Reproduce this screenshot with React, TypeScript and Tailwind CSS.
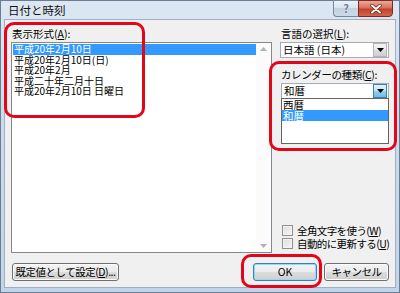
import type { ReactNode } from "react";

const vistaBtn =
  "bg-[linear-gradient(to_bottom,#f3f3f3_0%,#ebebeb_50%,#dddddd_50%,#cfcfcf_100%)]";

function Acc({ children }: { children: ReactNode }) {
  return <span className="underline underline-offset-[1px]">{children}</span>;
}

function Arrow({ active = false }: { active?: boolean }) {
  return (
    <div
      className={`w-[14px] h-[14px] flex items-center justify-center border ${
        active
          ? "border-[#3c7fb1] bg-[linear-gradient(to_bottom,#e5f4fc_0%,#c4e5f6_50%,#98d1ef_50%,#6cbbe6_100%)]"
          : `border-[#b5b5b5] ${vistaBtn}`
      }`}
    >
      <svg width="7" height="4" viewBox="0 0 7 4">
        <path d="M0 0h7L3.5 4z" fill="#000" />
      </svg>
    </div>
  );
}

function Check({ label }: { label: ReactNode }) {
  return (
    <div className="h-[13px] flex items-center gap-[4px] pl-[2px] whitespace-nowrap">
      <div className="w-[11px] h-[11px] shrink-0 border border-[#8e8f8f] bg-[linear-gradient(135deg,#dcdcdc,#f6f6f6)] shadow-[inset_0_0_0_1px_#f4f4f4]" />
      <span className="leading-[12px] tracking-[-0.6px]">{label}</span>
    </div>
  );
}

function Button({ children, primary = false, className = "" }: { children: ReactNode; primary?: boolean; className?: string }) {
  return (
    <div
      className={`h-[18px] flex items-center justify-center rounded-[3px] border whitespace-nowrap ${
        primary
          ? "border-[#3c7fb1] shadow-[inset_0_0_0_1px_#90dcf8]"
          : "border-[#707070] shadow-[inset_0_0_0_1px_#fbfbfb]"
      } ${vistaBtn} ${className}`}
    >
      <span className="leading-[12px]">{children}</span>
    </div>
  );
}

const formats = [
  "平成20年2月10日",
  "平成20年2月10日(日)",
  "平成20年2月",
  "平成二十年二月十日",
  "平成20年2月10日 日曜日",
];

export default function App() {
  return (
    <div className="w-[400px] h-[293px] relative overflow-hidden font-['Noto_Sans_CJK_JP','Noto_Sans',sans-serif] text-[10.5px] text-black bg-white">
      <div className="w-full h-full flex flex-col border border-[#6b7d92] bg-[linear-gradient(to_bottom,#dce7f3_0%,#ccdcec_40%,#c2d4e8_100%)]">
        {/* Title bar */}
        <div className="h-[18px] flex items-start shrink-0">
          <span className="pl-[7px] pt-[3px] text-[11.5px] leading-[13px] text-[#111]">日付と時刻</span>
          <div className="ml-auto mr-[6px] flex -mt-px">
            <div className="w-[25px] h-[17px] flex items-center justify-center rounded-bl-[4px] border border-[#76879c] border-r-0 bg-[linear-gradient(to_bottom,#eef3f9_0%,#d9e3ee_50%,#c3d1e1_50%,#ccdae8_100%)]">
              <span className="text-[11px] leading-[11px] font-bold text-[#6a7b8f] [text-shadow:0_0_1px_#fff]">?</span>
            </div>
            <div className="w-[35px] h-[17px] flex items-center justify-center rounded-br-[4px] border border-[#7b2c21] bg-[linear-gradient(to_bottom,#e9a999_0%,#d8715c_45%,#c5422a_55%,#d3664a_100%)]">
              <svg width="12" height="10" viewBox="0 0 12 10">
                <path d="M2 1.5l8 7M10 1.5l-8 7" stroke="#5a1d14" strokeWidth="3.4" strokeLinecap="round" />
                <path d="M2 1.5l8 7M10 1.5l-8 7" stroke="#fff" strokeWidth="2" strokeLinecap="round" />
              </svg>
            </div>
          </div>
        </div>

        {/* Client area */}
        <div className="flex-1 mx-[3px] mb-[4px] bg-[#f0f0f0] border border-[#9fb0c4] flex flex-col px-[6px] pt-[9px] pb-[6px]">
          <div className="flex-1 flex gap-[8px] min-h-0">
            {/* Left column */}
            <div className="w-[261px] flex flex-col">
              <div className="h-[10px] leading-[10px] pl-[1px]">
                表示形式(<Acc>A</Acc>):
              </div>
              <div className="mt-[3px] flex-1 flex border border-[#828790] bg-white">
                <div className="flex-1 pt-[1px] pl-[1px]">
                  {formats.map((f, i) => (
                    <div
                      key={f}
                      className={`h-[10.5px] leading-[10.5px] text-[10px] pl-[1px] whitespace-nowrap ${
                        i === 0 ? "bg-[#3399ff] text-white" : ""
                      }`}
                    >
                      {f}
                    </div>
                  ))}
                </div>
                <div className="w-[15px] flex flex-col justify-between items-center py-[4px] bg-[#fbfbfb]">
                  <svg width="7" height="4" viewBox="0 0 7 4">
                    <path d="M3.5 0L7 4H0z" fill="#b4b4b4" />
                  </svg>
                  <svg width="7" height="4" viewBox="0 0 7 4">
                    <path d="M0 0h7L3.5 4z" fill="#b4b4b4" />
                  </svg>
                </div>
              </div>
            </div>

            {/* Right column */}
            <div className="flex-1 flex flex-col min-w-0">
              <div className="h-[10px] leading-[10px] pl-[1px] whitespace-nowrap">
                言語の選択(<Acc>L</Acc>):
              </div>
              <div className="mt-[3px] h-[16px] flex items-center border border-[#a5acb5] bg-white pr-px">
                <span className="flex-1 pl-[2px] leading-[12px] whitespace-nowrap">日本語 (日本)</span>
                <Arrow />
              </div>

              <div className="mt-[12px] h-[10px] leading-[10px] pl-[1px] whitespace-nowrap tracking-[-0.4px]">
                カレンダーの種類(<Acc>C</Acc>):
              </div>
              <div className="relative mt-[3px] ml-px">
                <div className="h-[16px] flex items-center border border-[#a5acb5] bg-white pr-px">
                  <span className="flex-1 pl-[2px] leading-[12px]">和暦</span>
                  <Arrow active />
                </div>
                <div className="absolute left-0 right-0 top-[15px] h-[46px] border border-[#646464] bg-white z-10">
                  <div className="h-[11px] leading-[11px] pl-[1px]">西暦</div>
                  <div className="h-[11px] leading-[11px] pl-[1px] bg-[#3399ff] text-white">和暦</div>
                </div>
              </div>

              <div className="mt-auto pb-[3px] flex flex-col">
                <Check label={<>全角文字を使う(<Acc>W</Acc>)</>} />
                <Check label={<>自動的に更新する(<Acc>U</Acc>)</>} />
              </div>
            </div>
          </div>

          {/* Buttons */}
          <div className="mt-[10px] h-[18px] flex items-center">
            <Button className="w-[107px] ml-px tracking-[-0.5px]">
              既定値として設定(<Acc>D</Acc>)...
            </Button>
            <Button primary className="w-[64px] ml-auto">
              OK
            </Button>
            <Button className="w-[65px] ml-[7px] tracking-[-0.5px]">キャンセル</Button>
          </div>
        </div>
      </div>

      {/* Red annotation marks */}
      <div className="absolute left-[4px] top-[22px] w-[141px] h-[96px] border-[3px] border-[#e2061b] rounded-[10px]" />
      <div className="absolute left-[269px] top-[61px] w-[128px] h-[90px] border-[3px] border-[#e2061b] rounded-[10px]" />
      <div className="absolute left-[241px] top-[254px] w-[81px] h-[34px] border-[3px] border-[#e2061b] rounded-[10px]" />
    </div>
  );
}
